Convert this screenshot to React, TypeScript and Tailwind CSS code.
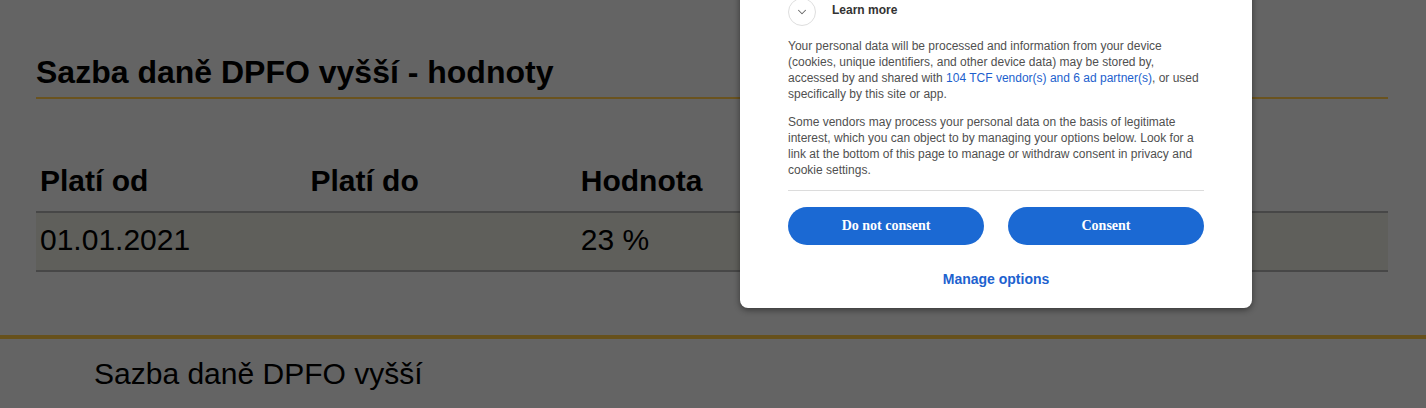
import React from "react";
import { ChevronDown } from "lucide-react";

const columns = ["Platí od", "Platí do", "Hodnota", "", ""];
const rows = [["01.01.2021", "", "23 %", "", ""]];

function ConsentDialog() {
  return (
    <div className="absolute left-[740px] top-[-30px] w-[512px] bg-white rounded-b-lg shadow-[0_2px_6px_rgba(0,0,0,0.45)] px-12 pt-[28px] pb-[21px] font-['Liberation_Sans',Arial,sans-serif]">
      {/* Learn more toggle */}
      <div className="flex items-start gap-4">
        <span className="flex h-7 w-7 shrink-0 items-center justify-center rounded-full border border-[#dedede] text-[#666]">
          <ChevronDown className="h-3.5 w-3.5" strokeWidth={1.75} />
        </span>
        <span className="mt-1 text-xs leading-4 font-bold text-[#333]">Learn more</span>
      </div>

      <p className="mt-3 text-xs leading-4 text-[#505050]">
        Your personal data will be processed and information from your device (cookies, unique identifiers, and other
        device data) may be stored by, accessed by and shared with{" "}
        <a href="#" className="text-[#1d5fce]">104 TCF vendor(s) and 6 ad partner(s)</a>, or used specifically by this
        site or app.
      </p>
      <p className="mt-3 text-xs leading-4 text-[#505050]">
        Some vendors may process your personal data on the basis of legitimate interest, which you can object to by
        managing your options below. Look for a link at the bottom of this page to manage or withdraw consent in
        privacy and cookie settings.
      </p>

      <div className="mt-3 h-px bg-[#dcdcdc]" />

      <div className="mt-4 grid grid-cols-2 gap-6">
        <button className="h-[38px] rounded-full bg-[#1b69d3] text-white text-sm font-bold font-['Liberation_Serif',serif]">
          Do not consent
        </button>
        <button className="h-[38px] rounded-full bg-[#1b69d3] text-white text-sm font-bold font-['Liberation_Serif',serif]">
          Consent
        </button>
      </div>

      <div className="mt-[26px] text-center text-sm leading-4">
        <a href="#" className="font-bold text-[#1d62cf]">Manage options</a>
      </div>
    </div>
  );
}

export default function App() {
  return (
    <div className="relative h-[408px] w-full overflow-hidden bg-[#646464] text-black font-['Liberation_Sans',Arial,sans-serif]">
      <div className="pl-[36px] pr-[38px] pt-[54px]">
        <h2 className="text-[32px] leading-9 font-bold pb-[7px] border-b-2 border-[#6a531f]">
          Sazba daně DPFO vyšší - hodnoty
        </h2>

        {/* values table */}
        <div className="mt-[55px]">
          <div className="grid grid-cols-5 border-b-2 border-[#474747]">
            {columns.map((c, i) => (
              <div key={i} className="px-1 pt-[10px] pb-[13px] text-[30px] leading-[34px] font-bold">
                {c}
              </div>
            ))}
          </div>
          {rows.map((r, i) => (
            <div key={i} className="grid grid-cols-5 bg-[#5f5f5b] border-b-2 border-[#474747]">
              {r.map((v, j) => (
                <div key={j} className="px-1 pt-[10px] pb-[13px] text-[30px] leading-[34px]">
                  {v}
                </div>
              ))}
            </div>
          ))}
        </div>
      </div>

      <div className="mt-[63px] h-1 bg-[#67511c]" />
      <div className="mt-[18px] pl-[94px] text-[30px] leading-[34px]">Sazba daně DPFO vyšší</div>

      <ConsentDialog />
    </div>
  );
}
